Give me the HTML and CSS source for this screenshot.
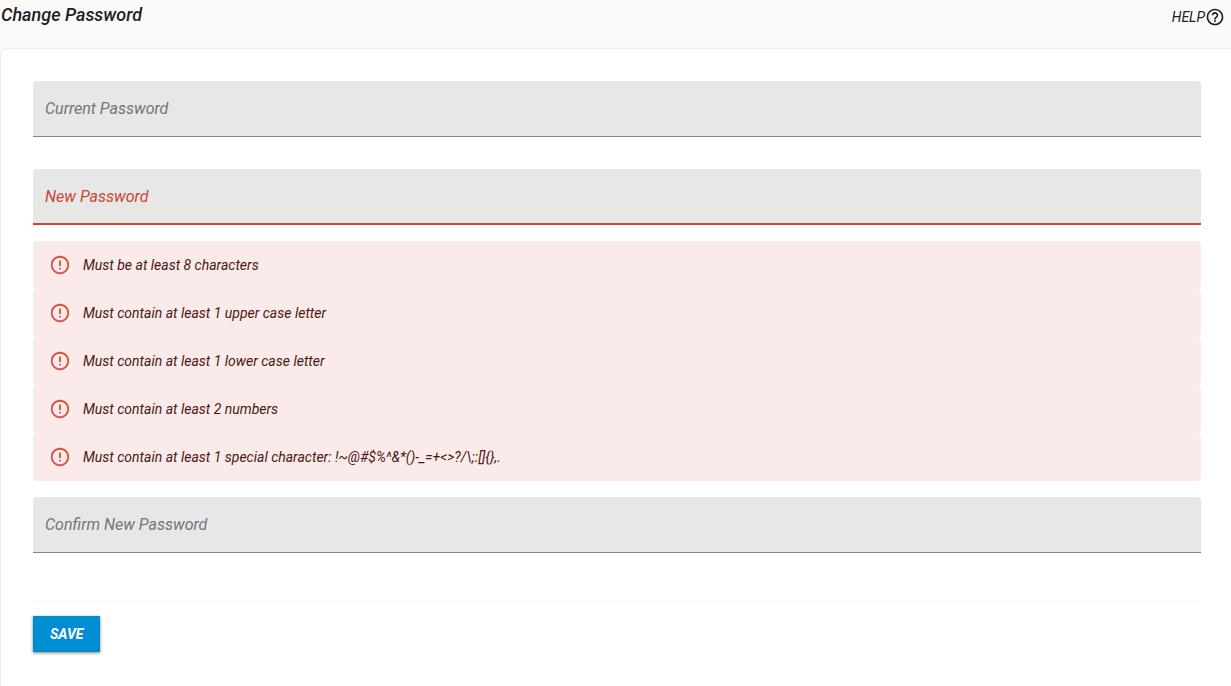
FILE: index.html
```html
<!DOCTYPE html>
<html lang="en">
<head>
  <meta charset="UTF-8">
  <meta name="viewport" content="width=device-width, initial-scale=1.0">
  <title>Change Password</title>
  <link rel="stylesheet" href="styles.css">
</head>
<body>
  <svg class="sprite" aria-hidden="true">
    <symbol id="icon-error" viewBox="0 0 24 24">
      <path d="M11 15h2v2h-2zm0-8h2v6h-2zm.99-5C6.47 2 2 6.48 2 12s4.47 10 9.99 10C17.52 22 22 17.52 22 12S17.52 2 11.99 2zM12 20c-4.42 0-8-3.58-8-8s3.58-8 8-8 8 3.58 8 8-3.58 8-8 8z"/>
    </symbol>
    <symbol id="icon-help" viewBox="0 0 24 24">
      <path d="M11 18h2v-2h-2v2zm1-16C6.48 2 2 6.48 2 12s4.48 10 10 10 10-4.48 10-10S17.52 2 12 2zm0 18c-4.41 0-8-3.59-8-8s3.59-8 8-8 8 3.59 8 8-3.59 8-8 8zm0-14c-2.21 0-4 1.79-4 4h2c0-1.1.9-2 2-2s2 .9 2 2c0 2-3 1.75-3 5h2c0-2.25 3-2.5 3-5 0-2.21-1.79-4-4-4z"/>
    </symbol>
  </svg>

  <header class="page-header">
    <h1>Change Password</h1>
    <a class="help-link" href="#">HELP<svg class="help-icon" aria-hidden="true"><use href="#icon-help"/></svg></a>
  </header>

  <main class="card">
    <form>
      <div class="field">
        <input type="password" id="currentPassword" autocomplete="current-password">
        <label for="currentPassword">Current Password</label>
      </div>

      <div class="field invalid">
        <input type="password" id="newPassword" autocomplete="new-password" aria-describedby="passwordRules">
        <label for="newPassword">New Password</label>
      </div>

      <ul class="rules" id="passwordRules">
        <li class="rule"><svg aria-hidden="true"><use href="#icon-error"/></svg>Must be at least 8 characters</li>
        <li class="rule"><svg aria-hidden="true"><use href="#icon-error"/></svg>Must contain at least 1 upper case letter</li>
        <li class="rule"><svg aria-hidden="true"><use href="#icon-error"/></svg>Must contain at least 1 lower case letter</li>
        <li class="rule"><svg aria-hidden="true"><use href="#icon-error"/></svg>Must contain at least 2 numbers</li>
        <li class="rule"><svg aria-hidden="true"><use href="#icon-error"/></svg>Must contain at least 1 special character: !~@#$%^&amp;*()-_=+&lt;&gt;?/\;:[]{},.</li>
      </ul>

      <div class="field">
        <input type="password" id="confirmPassword" autocomplete="new-password">
        <label for="confirmPassword">Confirm New Password</label>
      </div>

      <div class="actions">
        <button class="save-button" type="button">SAVE</button>
      </div>
    </form>
  </main>
</body>
</html>
```

FILE: styles.css
```css
* {
  box-sizing: border-box;
}

body {
  margin: 0;
  min-height: 100vh;
  display: flex;
  flex-direction: column;
  background-color: #fafafa;
  color: #212121;
  font-family: Roboto, sans-serif;
  font-style: italic;
}

.sprite {
  display: none;
}

.page-header {
  display: flex;
  justify-content: space-between;
  align-items: flex-start;
  padding: 3px 6px 22px 1px;
}

h1 {
  margin: 0;
  font-size: 18px;
  line-height: 24px;
  font-weight: 500;
}

.help-link {
  display: flex;
  align-items: center;
  padding-top: 4px;
  color: #212121;
  font-size: 14px;
  line-height: 20px;
  text-decoration: none;
}

.help-icon {
  width: 20px;
  height: 20px;
  fill: currentColor;
}

.card {
  flex: 1;
  margin-left: 1px;
  padding: 32px 30px 32px 32px;
  background-color: #fff;
  border-radius: 4px 0 0 0;
  box-shadow: 0 0 2px rgba(0, 0, 0, 0.2);
}

.field {
  position: relative;
  margin-bottom: 32px;
}

.field input {
  display: block;
  width: 100%;
  height: 56px;
  padding: 20px 12px 6px;
  border: none;
  border-bottom: 1px solid #868686;
  border-radius: 4px 4px 0 0;
  background-color: #e7e7e7;
  font: inherit;
  font-size: 16px;
  outline: none;
}

/* label sits over the empty input */
.field label {
  position: absolute;
  top: 16px;
  left: 12px;
  color: #757575;
  font-size: 16px;
  line-height: 24px;
  pointer-events: none;
}

.field.invalid {
  margin-bottom: 16px;
}

.field.invalid input {
  border-bottom: 2px solid #cd4534;
}

.field.invalid label {
  color: #cd4534;
}

.rules {
  margin: 0 0 16px;
  padding: 0;
  list-style: none;
}

.rule {
  display: flex;
  align-items: center;
  gap: 12px;
  min-height: 48px;
  padding: 0 16px;
  border-radius: 4px;
  background-color: #faebea;
  color: #4a1712;
  font-size: 14px;
  line-height: 20px;
}

.rule svg {
  flex: none;
  width: 22px;
  height: 22px;
  fill: #d9503f;
}

.actions {
  margin-top: 48px;
  padding-top: 14px;
  border-top: 1px solid #f7f7f7;
}

.save-button {
  height: 36px;
  padding: 0 17px;
  border: none;
  background-color: #018dd2;
  color: #fff;
  font: inherit;
  font-size: 14px;
  font-weight: 700;
  box-shadow: 0 1px 3px rgba(0, 0, 0, 0.5);
  cursor: pointer;
}
```
